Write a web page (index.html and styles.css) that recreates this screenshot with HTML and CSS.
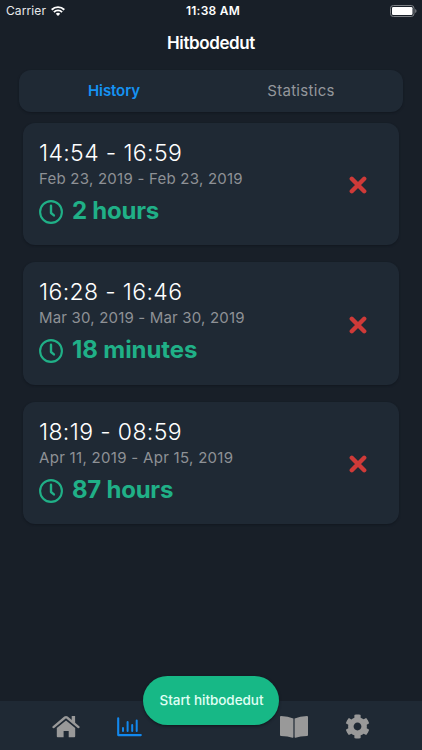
FILE: index.html
```html
<!DOCTYPE html>
<html lang="en">
<head>
<meta charset="utf-8">
<title>Hitbodedut</title>
<link rel="stylesheet" href="styles.css">
</head>
<body>
<svg class="defs" aria-hidden="true">
  <symbol id="clock" viewBox="0 0 24 24"><g fill="none" stroke="currentColor" stroke-linecap="round" stroke-linejoin="round"><circle cx="12" cy="12" r="10.9" stroke-width="2.1"/><path d="M12 5.8v7.2l2.9 2.4" stroke-width="2.4"/></g></symbol>
  <symbol id="cross" viewBox="0 0 18 18"><path d="M2.8 2.8l12.4 12.4M15.2 2.8L2.8 15.2" fill="none" stroke="currentColor" stroke-width="4.4" stroke-linecap="round"/></symbol>
</svg>
<div class="screen">
  <header class="status">
    <div class="carrier"><span>Carrier</span>
      <svg class="wifi" viewBox="0 0 14 10"><g fill="none" stroke="#fff" stroke-width="1.9"><path d="M.7 3.7a9 9 0 0 1 12.6 0"/><path d="M2.9 6.1a5.8 5.8 0 0 1 8.2 0"/></g><path d="M7 10L4.8 7.8a3.1 3.1 0 0 1 4.4 0z" fill="#fff"/></svg>
    </div>
    <div class="clock">11:38 AM</div>
    <svg class="battery" viewBox="0 0 27 12"><rect x=".5" y=".5" width="23.5" height="11" rx="2.8" fill="none" stroke="#7c8085"/><rect x="2" y="2" width="20.5" height="8" rx="1.3" fill="#fff"/><path d="M25.2 4v4q1.3-.6 1.3-2t-1.3-2z" fill="#7c8085"/></svg>
  </header>
  <h1 class="title">Hitbodedut</h1>
  <div class="tabs"><div class="tab active">History</div><div class="tab stats">Statistics</div></div>
  <main class="list">
    <article class="card">
      <div class="info"><div class="time">14:54 - 16:59</div><div class="date d1">Feb 23, 2019 - Feb 23, 2019</div><div class="duration"><svg class="clock-icon"><use href="#clock"/></svg><span>2 hours</span></div></div>
      <svg class="cross"><use href="#cross"/></svg>
    </article>
    <article class="card">
      <div class="info"><div class="time">16:28 - 16:46</div><div class="date d2">Mar 30, 2019 - Mar 30, 2019</div><div class="duration minutes"><svg class="clock-icon"><use href="#clock"/></svg><span>18 minutes</span></div></div>
      <svg class="cross"><use href="#cross"/></svg>
    </article>
    <article class="card">
      <div class="info"><div class="time">18:19 - 08:59</div><div class="date d3">Apr 11, 2019 - Apr 15, 2019</div><div class="duration"><svg class="clock-icon"><use href="#clock"/></svg><span>87 hours</span></div></div>
      <svg class="cross"><use href="#cross"/></svg>
    </article>
  </main>
  <nav class="bar">
    <svg class="home" viewBox="0 0 28 23"><path d="M4.8 12.9L14 5.5l9.2 7.4v8.4q0 .9-.9.9h-5.6v-6.3h-5.1v6.3H5.7q-.9 0-.9-.9z" fill="currentColor"/><path d="M1.5 12.1L13 2.5q1-.8 2 0l11.5 9.6" fill="none" stroke="currentColor" stroke-width="2.3" stroke-linecap="round"/><path d="M19.7 1h3.4v7.6l-3.4-2.8z" fill="currentColor"/></svg>
    <svg class="chart" viewBox="0 0 25 20"><g fill="none" stroke="currentColor" stroke-linecap="round" stroke-linejoin="round"><path d="M1.2 1.2v16.9h22.6" stroke-width="2.1"/><path d="M6 11v3M10.6 5v9M15.2 8v6M19.7 3.6V14" stroke-width="2"/></g></svg>
    <button class="start">Start hitbodedut</button>
    <svg class="book" viewBox="0 0 28 22"><path d="M13.4 2.5Q8 .2 1 .1q-1 0-1 1v17.8q0 .9 1 1 7 .1 11.5 1.9.9.2.9-.7zM14.6 2.5Q20 .2 27 .1q1 0 1 1v17.8q0 .9-1 1-7 .1-11.5 1.9-.9.2-.9-.7z" fill="currentColor"/></svg>
    <svg class="gear" viewBox="0 0 512 512"><path fill="currentColor" d="M487.4 315.7l-42.6-24.6c4.3-23.2 4.3-47 0-70.2l42.6-24.6c4.9-2.8 7.1-8.6 5.5-14-11.1-35.6-30-67.8-54.7-94.6-3.8-4.1-10-5.1-14.8-2.3L380.8 110c-17.9-15.4-38.5-27.3-60.8-35.1V25.8c0-5.6-3.9-10.5-9.4-11.7-36.7-8.2-74.3-7.8-109.2 0-5.5 1.2-9.4 6.1-9.4 11.7V75c-22.2 7.9-42.8 19.8-60.8 35.1L88.7 85.5c-4.9-2.8-11-1.9-14.8 2.3-24.7 26.7-43.6 58.9-54.7 94.6-1.7 5.4.6 11.2 5.5 14L67.3 221c-4.3 23.2-4.3 47 0 70.2l-42.6 24.6c-4.9 2.8-7.1 8.6-5.5 14 11.1 35.6 30 67.8 54.7 94.6 3.8 4.1 10 5.1 14.8 2.3l42.6-24.6c17.9 15.4 38.5 27.3 60.8 35.1v49.2c0 5.6 3.9 10.5 9.4 11.7 36.7 8.2 74.3 7.8 109.2 0 5.5-1.2 9.4-6.1 9.4-11.7v-49.2c22.2-7.9 42.8-19.8 60.8-35.1l42.6 24.6c4.9 2.8 11 1.9 14.8-2.3 24.7-26.7 43.6-58.9 54.7-94.6 1.5-5.5-.7-11.3-5.6-14.1zM256 336c-44.1 0-80-35.9-80-80s35.9-80 80-80 80 35.9 80 80-35.9 80-80 80z"/></svg>
  </nav>
</div>
</body>
</html>
```
FILE: styles.css
```css
* { box-sizing: border-box; }
body { margin: 0; background: #181f28; font-family: Inter, sans-serif; color: #fff; }
.defs { position: absolute; width: 0; height: 0; }
.screen { height: 750px; display: flex; flex-direction: column; overflow: hidden; white-space: nowrap; }
svg { display: block; flex: none; }
.status { height: 22px; display: grid; grid-template-columns: 1fr auto 1fr; align-items: center; padding: 0 5px 0 6px; font-size: 12px; line-height: 22px; }
.carrier { display: flex; align-items: center; gap: 5px; letter-spacing: .1px; color: #e8eaec; }
.wifi { width: 14px; height: 10px; }
.clock { font-weight: 600; font-size: 12px; letter-spacing: .25px; padding-left: 3px; }
.battery { width: 27px; height: 12px; justify-self: end; }
.title { margin: 0; height: 48px; line-height: 43px; text-align: center; font-size: 17px; font-weight: 600; letter-spacing: -.4px; }
.tabs { height: 42px; flex: none; margin: 0 19px; border-radius: 12px; background: #1f2934; display: flex; line-height: 42px; text-align: center; font-size: 15px; color: #94979c; box-shadow: 0 1px 2px #121820; }
.tab { width: 192px; }
.active { color: #1593f3; font-weight: 600; padding-right: 2px; letter-spacing: -.1px; }
.stats { letter-spacing: .3px; padding-right: 12px; }
.list { flex: 1; display: flex; flex-direction: column; gap: 17px; padding: 10.5px 23px 0; }
.card { height: 122.5px; flex: none; border-radius: 12px; background: #1f2934; display: flex; justify-content: space-between; padding: 16px 32px 0 16px; box-shadow: 0 1px 2px #121820; }
.time { height: 28px; line-height: 28px; font-size: 23px; font-weight: 300; letter-spacing: .37px; }
.date { height: 24px; line-height: 24px; font-size: 15px; color: #8e9196; }
.d1 { letter-spacing: .24px; }
.d2 { letter-spacing: .18px; }
.d3 { letter-spacing: .3px; }
.duration { height: 40px; line-height: 40px; display: flex; align-items: center; gap: 9px; font-size: 24px; font-weight: 700; color: #20b087; letter-spacing: -.25px; }
.minutes { letter-spacing: -.1px; }
.clock-icon { width: 24px; height: 24px; margin-top: 2px; }
.cross { width: 18px; height: 18px; margin-top: 37.5px; color: #cf3a38; }
.bar { height: 49px; flex: none; margin-bottom: 0; background: #1f2934; display: flex; align-items: flex-start; color: #999; }
.home { width: 28px; height: 23px; margin: 14px 0 0 52px; }
.chart { width: 25px; height: 20px; margin: 16px 0 0 37px; color: #1288ee; }
.start { width: 136px; height: 49px; margin: -25px 0 0 1px; padding: 0 0 1px 1px; flex: none; border: 0; border-radius: 25px; background: #17b886; color: #e0fff5; font: 500 13.5px Inter, sans-serif; letter-spacing: -.05px; box-shadow: 0 1px 3px #10161d; }
.book { width: 28px; height: 22px; margin: 15px 0 0 1px; }
.gear { width: 25px; height: 25px; margin: 13px 0 0 37px; }
```
